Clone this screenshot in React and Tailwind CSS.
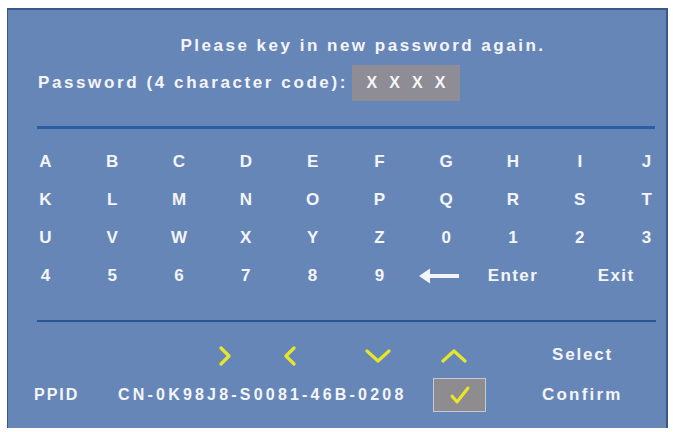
import React from "react";

const ROWS = [
  ["A", "B", "C", "D", "E", "F", "G", "H", "I", "J"],
  ["K", "L", "M", "N", "O", "P", "Q", "R", "S", "T"],
  ["U", "V", "W", "X", "Y", "Z", "0", "1", "2", "3"],
];

const osd = { fontFamily: '"Liberation Sans", Arial, sans-serif' };

function Chevron({ dir }) {
  // yellow OSD navigation hints
  const paths = {
    right: "M4 2 L12 10 L4 18",
    left: "M12 2 L4 10 L12 18",
    down: "M2 3 L13 13 L24 3",
    up: "M2 13 L13 3 L24 13",
  };
  const wide = dir === "down" || dir === "up";
  return (
    <svg width={wide ? 26 : 16} height={wide ? 16 : 20} viewBox={wide ? "0 0 26 16" : "0 0 16 20"}>
      <path d={paths[dir]} fill="none" stroke="#e6e62a" strokeWidth="3.2" strokeLinecap="round" strokeLinejoin="round" />
    </svg>
  );
}

function BackArrow() {
  return (
    <svg width="42" height="16" viewBox="0 0 42 16">
      <path d="M1 8 L12 0.5 L12 6 L41 6 L41 10 L12 10 L12 15.5 Z" fill="#f2f4f8" />
    </svg>
  );
}

export default function App() {
  return (
    <div className="w-[673px] h-[432px] bg-white pt-[8px] pl-[7px]" style={osd}>
      <div className="w-[661px] h-[420px] bg-[#6786b8] border-t-2 border-l border-r-2 border-[#3a5788] overflow-hidden text-[#f4f5f8] font-bold">
        <div className="pt-[26px] text-center text-[17px] leading-[20px] tracking-[2.5px] pl-[52px]">
          Please key in new password again.
        </div>

        <div className="mt-[9px] flex items-center pl-[30px]">
          <span className="text-[17px] leading-[20px] tracking-[2.6px]">Password (4 character code):</span>
          <div className="ml-[4px] w-[108px] h-[36px] bg-[#8e8d95] flex items-center justify-center gap-[12px] text-[16px]">
            <span>X</span>
            <span>X</span>
            <span>X</span>
            <span>X</span>
          </div>
        </div>

        <div className="mt-[25px] ml-[29px] mr-[11px] h-[3px] bg-[#2c5ea8]" />

        <div className="mt-[14px] pl-[4px] grid grid-cols-[repeat(10,66.8px)] text-[17px]">
          {ROWS.flat().map((k, i) => (
            <div key={i} className="h-[38px] flex items-center justify-center">
              {k}
            </div>
          ))}
          {["4", "5", "6", "7", "8", "9"].map((k) => (
            <div key={k} className="h-[38px] flex items-center justify-center">
              {k}
            </div>
          ))}
          <div className="h-[38px] flex items-center justify-center pr-[14px]">
            <BackArrow />
          </div>
          <div className="h-[38px] flex items-center justify-center tracking-[1.4px]">Enter</div>
          <div className="col-span-2 h-[38px] flex items-center justify-center tracking-[1.4px] pl-[6px]">Exit</div>
        </div>

        <div className="mt-[25px] ml-[29px] mr-[10px] h-[2px] bg-[#2b5595]" />

        <div className="mt-[16px] grid grid-cols-[110px_315px_53px_1fr] grid-rows-[36px_42px] items-center">
          <div className="col-span-3 flex items-center pl-[209px]">
            <Chevron dir="right" />
            <span className="ml-[49px]"><Chevron dir="left" /></span>
            <span className="ml-[67px]"><Chevron dir="down" /></span>
            <span className="ml-[50px]"><Chevron dir="up" /></span>
          </div>
          <div className="text-[17px] tracking-[1.8px] pl-[66px] pb-[2px]">Select</div>

          <div className="pl-[26px] text-[16px] tracking-[2px]">PPID</div>
          <div className="text-[16px] tracking-[3.2px]">CN-0K98J8-S0081-46B-0208</div>
          <div className="w-[53px] h-[34px] bg-[#8e8c8f] border border-[#c6c9d2] flex items-center justify-center">
            <svg width="22" height="20" viewBox="0 0 22 20">
              <path d="M3 11 L8 17 L19 3" fill="none" stroke="#e9e629" strokeWidth="3" strokeLinecap="round" strokeLinejoin="round" />
            </svg>
          </div>
          <div className="text-[17px] tracking-[2.2px] pl-[56px]">Confirm</div>
        </div>
      </div>
    </div>
  );
}
